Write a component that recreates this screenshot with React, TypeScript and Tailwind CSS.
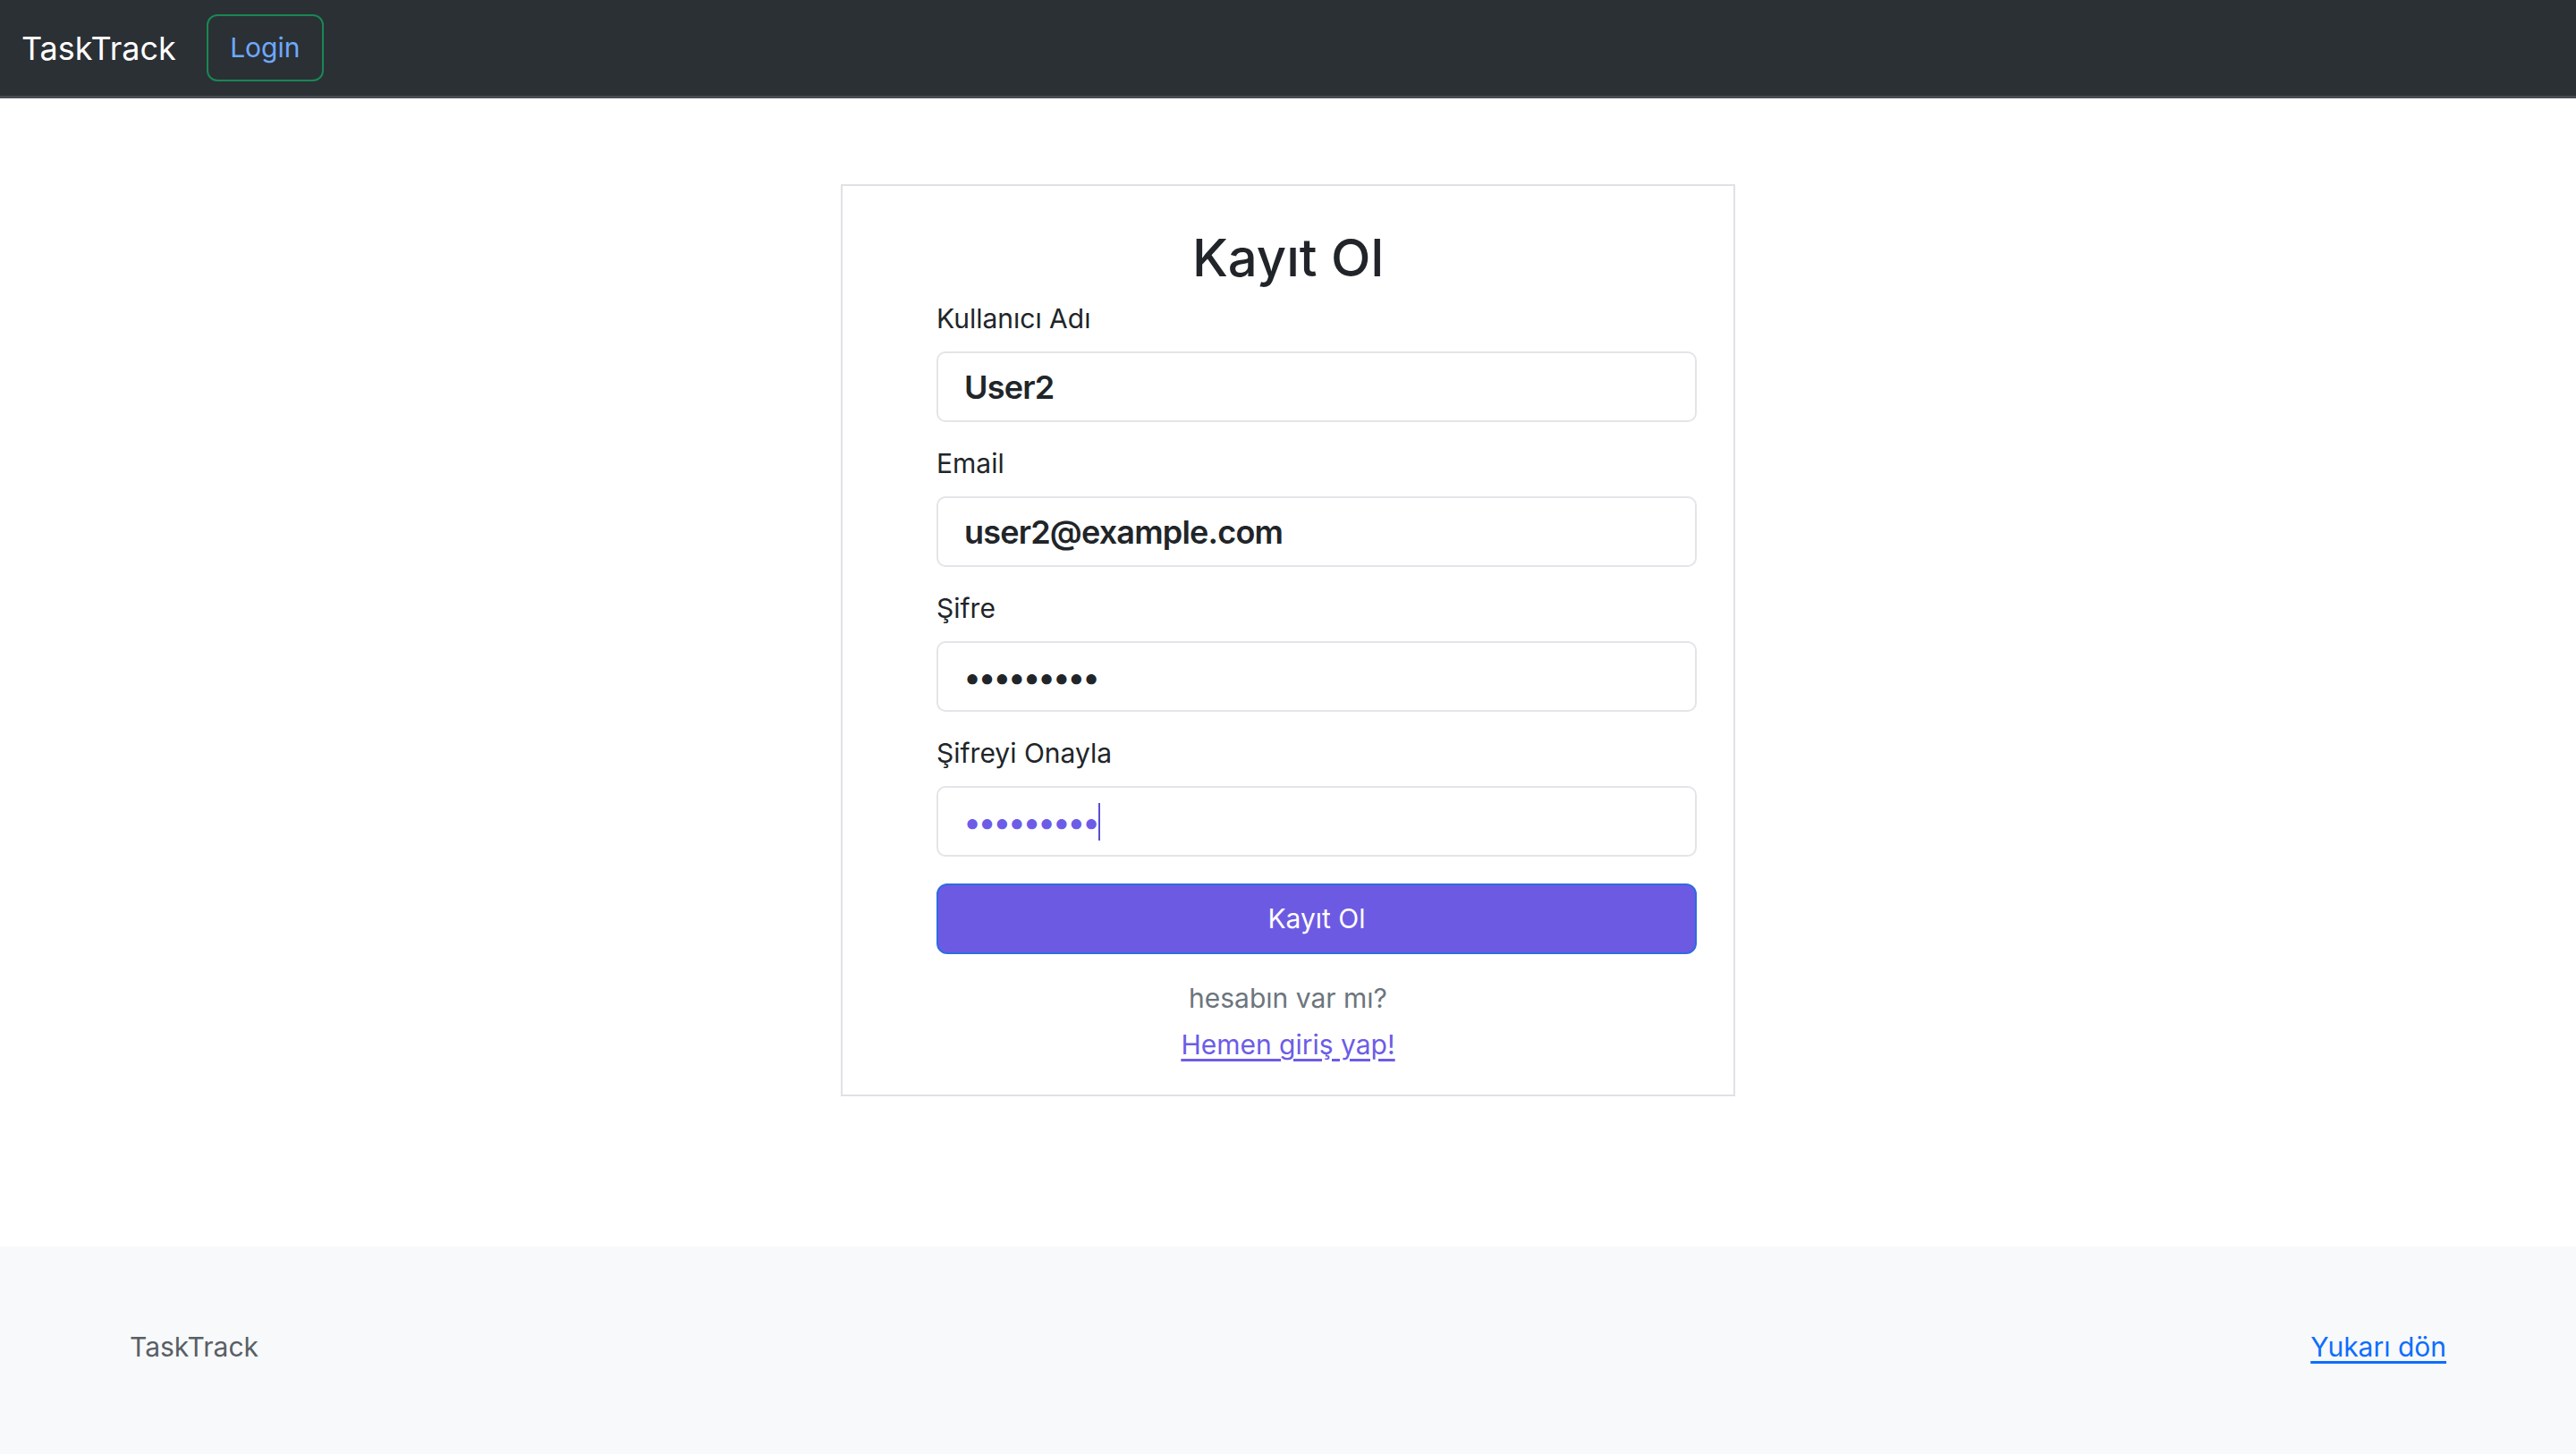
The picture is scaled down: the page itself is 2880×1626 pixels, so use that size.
import { useState } from 'react'

const font = { fontFamily: 'Inter, "Noto Sans", sans-serif' }

interface FieldProps {
  label: string
  type?: string
  value: string
}

function Field({ label, type = 'text', value }: FieldProps) {
  return (
    <div className="mb-[24px]">
      <label className="block text-[30px] leading-[44px] text-[#212529] mb-[15px]">{label}</label>
      <input
        type={type}
        value={value}
        readOnly
        className={
          'w-full h-[79px] px-[29px] border-2 border-[#e3e5e8] rounded-[10px] bg-white text-[36px] font-semibold text-[#212529] outline-none ' +
          (type === 'password' ? 'tracking-[-1.5px]' : 'tracking-[-0.8px]')
        }
        style={font}
      />
    </div>
  )
}

export default function App() {
  const [confirm] = useState('•••••••••')

  return (
    <div className="min-h-screen flex flex-col bg-white" style={font}>
      <nav className="h-[110px] bg-[#2b3035] border-b-[3px] border-[#474c52] flex items-center pl-[24px]">
        <span className="text-[36px] text-white mr-[34px]">TaskTrack</span>
        <button className="h-[75px] w-[131px] border-2 border-[#198754] rounded-[12px] text-[#6ea8fe] text-[30px]">
          Login
        </button>
      </nav>

      <main className="flex-1 flex justify-center pt-[96px] pb-[168px]">
        <div className="w-[1000px] border-2 border-[#dee2e6] pt-[44px] pb-[30px]">
          <h2 className="text-center text-[58px] leading-[72px] font-medium text-[#212529] mb-[10px]">Kayıt Ol</h2>

          <form className="ml-[105px] w-[850px]" onSubmit={e => e.preventDefault()}>
            <Field label="Kullanıcı Adı" value="User2" />
            <Field label="Email" type="email" value="user2@example.com" />
            <Field label="Şifre" type="password" value="123456789" />

            <div className="mb-[30px]">
              <label className="block text-[30px] leading-[44px] text-[#212529] mb-[15px]">Şifreyi Onayla</label>
              <div className="w-full h-[79px] px-[29px] border-2 border-[#e3e5e8] rounded-[10px] bg-white flex items-center">
                <span className="text-[36px] font-semibold text-[#6c5ce7] tracking-[-1.5px]">{confirm}</span>
                <span className="w-[2px] h-[42px] bg-[#5a4fcf]" />
              </div>
            </div>

            <button
              type="submit"
              className="w-full h-[79px] rounded-[12px] bg-[#6d5ae3] border-2 border-[#2f6be0] text-white text-[30px]"
            >
              Kayıt Ol
            </button>
          </form>

          <p className="text-center text-[30px] leading-[44px] text-[#6c757d] mt-[27px]">hesabın var mı?</p>
          <p className="text-center text-[30px] leading-[44px] mt-[8px]">
            <a href="#" className="text-[#6c5ce7] underline underline-offset-[5px]">
              Hemen giriş yap!
            </a>
          </p>
        </div>
      </main>

      <footer className="h-[232px] bg-[#f8f9fa] flex items-center justify-between px-[145px] pb-[8px]">
        <span className="text-[30px] text-[#595f66]">TaskTrack</span>
        <a href="#" className="text-[30px] text-[#0d6efd] underline underline-offset-[5px]">
          Yukarı dön
        </a>
      </footer>
    </div>
  )
}
